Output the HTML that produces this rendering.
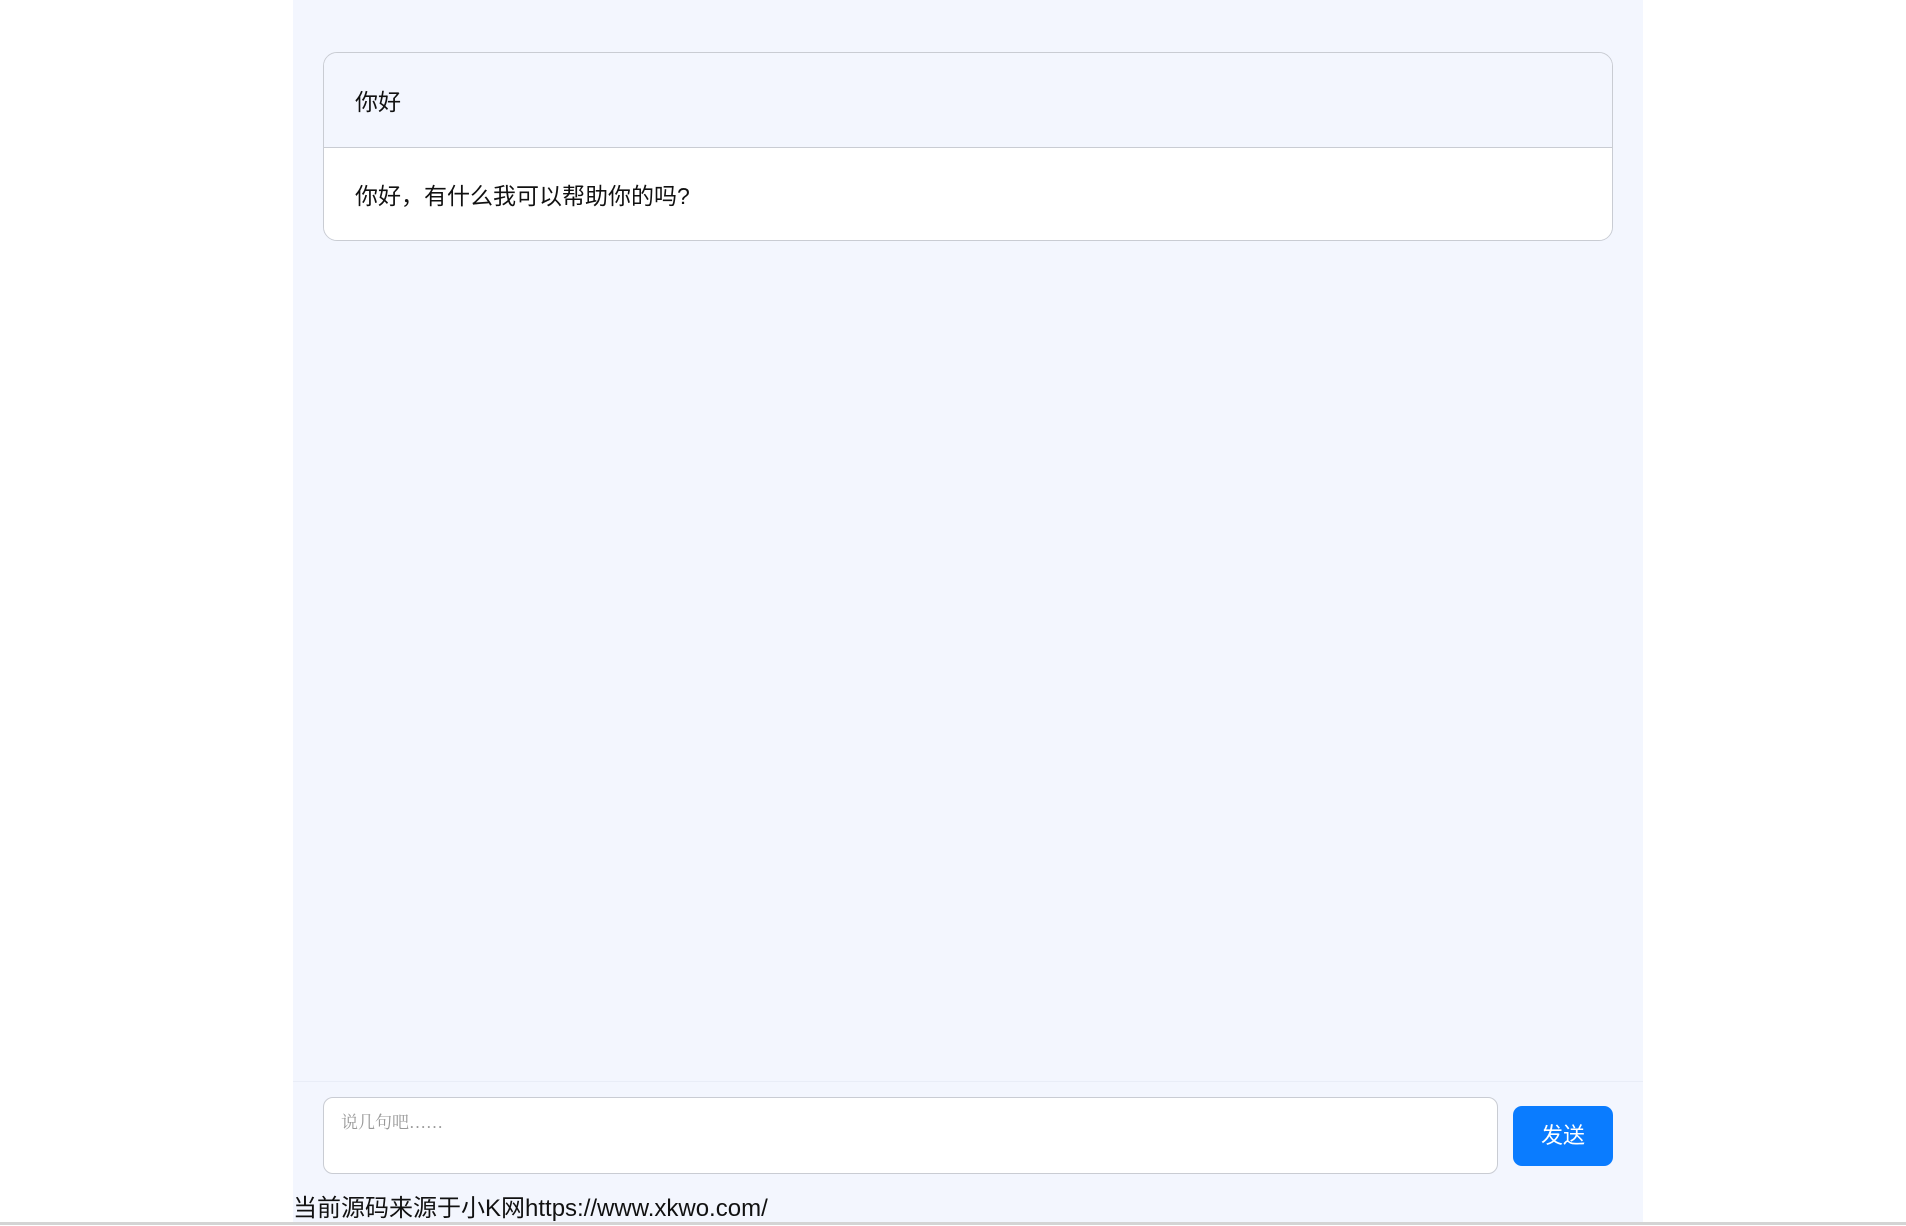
<!DOCTYPE html>
<html><head><meta charset="utf-8"><style>
html,body{margin:0;padding:0;width:1906px;height:1225px;overflow:hidden;background:#fff;font-family:"Liberation Sans","Noto Sans CJK SC",sans-serif;}
.panel{position:absolute;left:293px;top:0;width:1350px;height:1222px;background:#f3f6fe;}
.card{position:absolute;left:323px;top:52px;width:1290px;height:189px;border:1px solid #c9ccd3;border-radius:14px;overflow:hidden;box-sizing:border-box;}
.r1{height:95px;background:#f3f6fe;border-bottom:1px solid #c9ccd3;box-sizing:border-box;}
.r2{height:94px;background:#fff;}
.t{position:absolute;left:31px;font-size:23px;color:#111;line-height:30px;}
.sep{position:absolute;left:293px;top:1081px;width:1350px;height:1px;background:#e9edf7;}
.ta{position:absolute;left:323px;top:1097px;width:1175px;height:77px;background:#fff;border:1px solid #c9ccd3;border-radius:10px;box-sizing:border-box;}
.ph{position:absolute;left:17px;top:10px;font-size:17px;color:#999;font-family:"Liberation Serif","Noto Serif CJK SC",serif;}
.btn{position:absolute;left:1513px;top:1106px;width:100px;height:60px;background:#0a7cff;border-radius:9px;color:#fff;font-size:22px;text-align:center;line-height:60px;}
.foot{position:absolute;left:293px;top:1192px;font-size:24px;line-height:34px;color:#111;}
.bar{position:absolute;left:0;top:1222px;width:1906px;height:3px;background:#d4d4d4;}
</style></head><body>
<div class="panel"></div>
<div class="card">
<div class="r1"></div><div class="r2"></div>
<div class="t" style="top:34px">你好</div>
<div class="t" style="top:128px">你好，有什么我可以帮助你的吗?</div>
</div>
<div class="sep"></div>
<div class="ta"><div class="ph">说几句吧……</div></div>
<div class="btn">发送</div>
<div class="foot">当前源码来源于小K网https://www.xkwo.com/</div>
<div class="bar"></div>
</body></html>
